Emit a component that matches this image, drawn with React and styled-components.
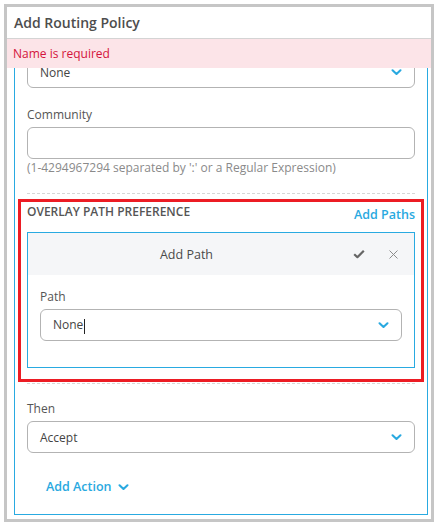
import React from 'react';
import styled, {createGlobalStyle} from 'styled-components';

const GlobalStyle = createGlobalStyle`
	body {
		margin: 0;
		background: #fff;
		font-family: 'Open Sans', 'Noto Sans', sans-serif;
	}
`;

const Frame = styled.div`
	margin: 4px 0 0 4px;
	width: 430px;
	height: 518px;
	box-sizing: border-box;
	border: 3px solid #c6c6c6;
	background: #fff;
	display: flex;
	flex-direction: column;
`;

const Header = styled.div`
	height: 32px;
	box-sizing: border-box;
	border-bottom: 1px solid #d4d4d4;
	padding-left: 7px;
	display: flex;
	align-items: center;
	font-size: 14px;
	font-weight: 600;
	color: #4d4d4d;
`;

const Body = styled.div`
	position: relative;
	flex: 1;
	overflow: hidden;
`;

const Banner = styled.div`
	position: absolute;
	top: 0;
	left: 0;
	right: 0;
	height: 29px;
	z-index: 2;
	background: #fce4e8;
	color: #d4143c;
	font-size: 12px;
	padding-left: 6px;
	display: flex;
	align-items: center;
`;

const Card = styled.div`
	margin: 0 3px 0 7px;
	border: 1px solid #29aae1;
	padding: 16px 12px 18px;
`;

const Label = styled.div`
	font-size: 12px;
	line-height: 18px;
	padding-top: 1px;
	color: #555;
	margin-top: ${(p) => p.$top || 0}px;
	margin-bottom: 3px;
`;

const SelectBox = styled.div`
	height: 32px;
	box-sizing: border-box;
	border: 1px solid #b3b3b3;
	border-radius: 6px;
	padding: 0 12px;
	display: flex;
	align-items: center;
	justify-content: space-between;
	font-size: 12px;
	color: #444;
`;

const Caret = styled.span`
	display: inline-block;
	width: 1px;
	height: 15px;
	background: #222;
	vertical-align: middle;
	margin-left: 1px;
`;

const Input = styled.div`
	height: 32px;
	box-sizing: border-box;
	border: 1px solid #b3b3b3;
	border-radius: 6px;
`;

const Help = styled.div`
	margin-top: 1px;
	font-size: 12px;
	line-height: 16px;
	color: #8a8a8a;
`;

const Section = styled.div`
	margin-top: 17px;
	border-top: 1px dashed #d6d6d6;
	border-bottom: 1px dashed #d6d6d6;
	padding: 5px 0 1px;
`;

const Highlight = styled.div`
	margin: 0 -9px;
	border: 3px solid #ec1c24;
	padding: 0 6px 11px;
`;

const TitleRow = styled.div`
	height: 30px;
	display: flex;
	justify-content: space-between;
	align-items: flex-start;
`;

const SectionTitle = styled.div`
	font-size: 12px;
	font-weight: 600;
	line-height: 19px;
	color: #555;
`;

const LinkText = styled.div`
	font-size: 12.5px;
	font-weight: 600;
	color: #29a9e0;
	line-height: 18px;
	padding-top: ${(p) => (p.$inline ? 0 : 4)}px;
	display: ${(p) => (p.$inline ? 'inline-flex' : 'flex')};
	align-items: center;
	gap: 6px;
`;

const PathCard = styled.div`
	border: 1px solid #29aae1;
`;

const PathHeader = styled.div`
	height: 42px;
	background: #f5f6f8;
	display: flex;
	align-items: center;
`;

const PathTitle = styled.div`
	flex: 1;
	text-align: center;
	font-size: 12.5px;
	color: #4a4a4a;
`;

const Icons = styled.div`
	display: flex;
	align-items: center;
	gap: 24px;
	padding: 0 16px 0 8px;
`;

const PathBody = styled.div`
	padding: 12px 12px 26px;
`;

const ActionRow = styled.div`
	margin-top: 21px;
	padding-left: 19px;
`;

const Chevron = ({size = 11, color = '#29a9e0'}) => (
	<svg width={size} height={size * 0.6} viewBox='0 0 11 7'>
		<polyline points='1.3,1.3 5.5,5.3 9.7,1.3' fill='none' stroke={color} strokeWidth='2.2' strokeLinecap='round' strokeLinejoin='round' />
	</svg>
);

const Check = () => (
	<svg width='12' height='10' viewBox='0 0 12 10'>
		<polyline points='1.2,5.2 4.4,8.2 10.8,1.8' fill='none' stroke='#666' strokeWidth='2.2' strokeLinejoin='round' />
	</svg>
);

const Close = () => (
	<svg width='9' height='9' viewBox='0 0 9 9'>
		<path d='M0.5 0.5 L8.5 8.5 M8.5 0.5 L0.5 8.5' stroke='#8c8c8c' strokeWidth='1' />
	</svg>
);

const Select = ({value, caret}) => (
	<SelectBox>
		<span>
			{value}
			{caret && <Caret />}
		</span>
		<Chevron />
	</SelectBox>
);

const App = () => {
	return (
		<>
			<GlobalStyle />
			<Frame>
				<Header>Add Routing Policy</Header>
				<Body>
					<Banner>Name is required</Banner>
					<Card>
						<Select value='None' />

						<Label $top={17}>Community</Label>
						<Input />
						<Help>(1-4294967294 separated by ':' or a Regular Expression)</Help>

						<Section>
							<Highlight>
								<TitleRow>
									<SectionTitle>OVERLAY PATH PREFERENCE</SectionTitle>
									<LinkText>Add Paths</LinkText>
								</TitleRow>
								<PathCard>
									<PathHeader>
										<PathTitle>Add Path</PathTitle>
										<Icons>
											<Check />
											<Close />
										</Icons>
									</PathHeader>
									<PathBody>
										<Label>Path</Label>
										<Select value='None' caret />
									</PathBody>
								</PathCard>
							</Highlight>
						</Section>

						<Label $top={15}>Then</Label>
						<Select value='Accept' />

						<ActionRow>
							<LinkText $inline>
								Add Action <Chevron />
							</LinkText>
						</ActionRow>
					</Card>
				</Body>
			</Frame>
		</>
	);
};

export default App;
